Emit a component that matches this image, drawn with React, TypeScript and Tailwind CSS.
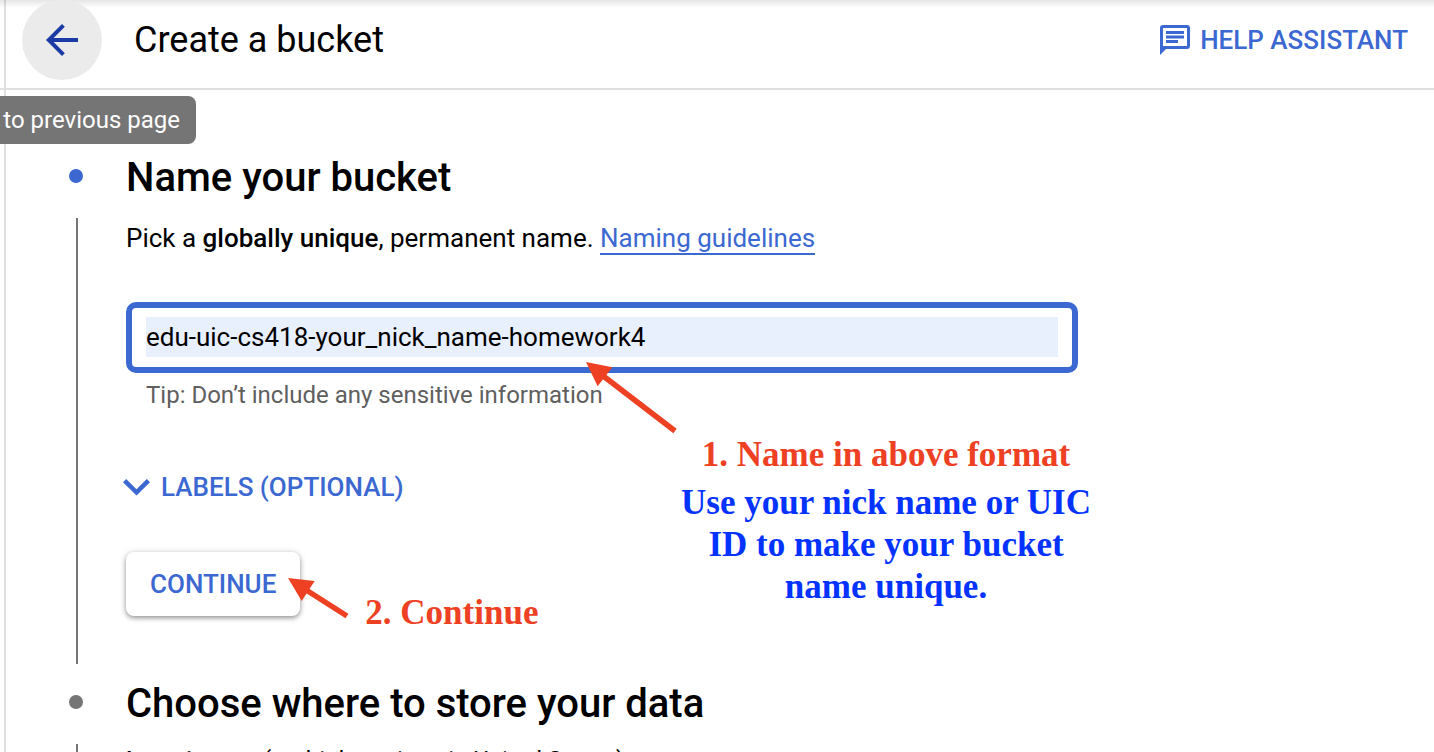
import { MdArrowBack } from "react-icons/md";

function Arrow({ className, width, height }: { className: string; width: number; height: number }) {
  const length = Math.hypot(width, height);
  const ux = width / length;
  const uy = height / length;
  const head = 24;
  const spread = 12;
  const bx = ux * head;
  const by = uy * head;
  const points = `0,0 ${bx + uy * spread},${by - ux * spread} ${bx - uy * spread},${by + ux * spread}`;
  return (
    <svg aria-hidden="true" className={className} width={width} height={height} overflow="visible">
      <line x1={bx - 2} y1={by - 1} x2={width} y2={height} stroke="#ee4023" strokeWidth="5.5" />
      <polygon points={points} fill="#ee4023" />
    </svg>
  );
}

export default function App() {
  return (
    <div className="h-screen overflow-hidden bg-white font-['Roboto',sans-serif] text-black">
      <div className="relative ml-1 min-h-full border-l-2 border-[#e0e0e0]">
        <div className="pointer-events-none absolute top-0 right-0 -left-1.5 h-2 bg-linear-to-b from-black/10 to-transparent" />
        <header className="relative -ml-1.5 flex h-[90px] items-start justify-between border-b-2 border-[#e0e0e0] pr-[26px] pl-[22px]">
          <div className="flex items-center gap-8">
            <button
              type="button"
              aria-label="Back to previous page"
              className="flex size-20 items-center justify-center rounded-full bg-[#ebebeb] text-[#1a3aa6]"
            >
              <MdArrowBack aria-hidden="true" className="size-12" />
            </button>
            <h1 className="text-[36px] leading-10">Create a bucket</h1>
          </div>
          <button type="button" className="flex h-20 items-center gap-2.5 text-[26px] font-medium text-[#3b68d1]">
            <svg aria-hidden="true" viewBox="0 0 30 30" className="size-[30px]" fill="none">
              <path
                d="M0 30V3a3 3 0 0 1 3-3h24a3 3 0 0 1 3 3v18a3 3 0 0 1-3 3H6zM3 3v18h24V3zM6 6h18v3H6zM6 10.500h18v3H6zM6 15h12v3H6z"
                fill="currentColor"
                fillRule="evenodd"
              />
            </svg>
            HELP ASSISTANT
          </button>
        </header>

        <div
          role="tooltip"
          className="absolute top-24 right-full -mr-[190px] flex h-12 items-center rounded-r-lg bg-[#757575] px-4 text-2xl whitespace-nowrap text-white"
        >
          Back to previous page
        </div>

        <main className="pt-[62px] pl-[62px]">
          <section className="grid grid-cols-[16px_1fr] gap-x-[42px]">
            <div className="flex flex-col items-center gap-[35px] pt-[17px] pb-3.5">
              <span className="size-3.5 shrink-0 rounded-full bg-[#3b68d1]" />
              <span className="ml-0.5 w-0.5 grow bg-[#757575]" />
            </div>
            <div className="pb-11">
              <h2 className="text-[40px] leading-[52px] font-medium">Name your bucket</h2>
              <p className="mt-4 text-[26px] leading-9">
                Pick a <strong className="font-medium">globally unique</strong>, permanent name.{" "}
                <a href="#naming-guidelines" className="inline-block border-b-2 border-[#3b68d1] leading-[30px] text-[#3b68d1]">
                  Naming guidelines
                </a>
              </p>
              <div className="relative mt-[46px] w-[952px] max-w-full">
                <div className="rounded-[10px] border-6 border-[#3b68d1] px-3.5 pt-[9px] pb-2.5">
                  <input
                    aria-label="Bucket name"
                    aria-describedby="name-tip"
                    defaultValue="edu-uic-cs418-your_nick_name-homework4"
                    className="block h-10 w-full bg-[#e8effd] text-[26px] outline-none"
                  />
                </div>
                <p id="name-tip" className="mt-1 pl-5 text-2xl leading-9 text-[#5f5f5f]">
                  Tip: Don’t include any sensitive information
                </p>
                <Arrow className="absolute top-[60px] left-[460px]" width={89} height={69} />
                <div className="absolute top-[132px] left-[545px] w-[430px] text-center font-['Liberation_Serif',serif] text-[35px] leading-[42px] font-bold">
                  <p className="text-[#ee4023]">1. Name in above format</p>
                  <p className="mt-1.5 text-[#0433ff]">Use your nick name or UIC ID to make your bucket name unique.</p>
                </div>
              </div>
              <button type="button" className="mt-[54px] -ml-[3px] flex items-center gap-[11px] text-[26px] leading-10 font-medium text-[#3b68d1]">
                <svg aria-hidden="true" viewBox="0 0 27 17" className="h-[17px] w-[27px]" fill="none">
                  <path d="M3.200 0 13.500 10.300 23.800 0 27 3.200 13.500 16.500 0 3.200z" fill="currentColor" />
                </svg>
                LABELS (OPTIONAL)
              </button>
              <div className="relative mt-[45px] flex items-start">
                <button
                  type="button"
                  className="h-16 rounded-lg bg-white px-6 text-[26px] font-medium text-[#3b68d1] shadow-[0_2px_5px_rgba(0,0,0,0.4),0_0_8px_rgba(0,0,0,0.08)]"
                >
                  CONTINUE
                </button>
                <Arrow className="absolute top-[26px] left-[162px]" width={59} height={38} />
                <p className="mt-10 ml-[65px] font-['Liberation_Serif',serif] text-[35px] leading-[42px] font-bold text-[#ee4023]">
                  2. Continue
                </p>
              </div>
            </div>
          </section>
          <section className="grid grid-cols-[16px_1fr] gap-x-[42px]">
            <div className="flex flex-col items-center gap-[35px] pt-[17px]">
              <span className="size-3.5 shrink-0 rounded-full bg-[#757575]" />
              <span className="ml-0.5 w-0.5 grow bg-[#757575]" />
            </div>
            <div>
              <h2 className="text-[40px] leading-[52px] font-medium">Choose where to store your data</h2>
              <p className="mt-3 text-2xl leading-9">
                <strong className="font-medium">Location:</strong> us (multiple regions in United States)
              </p>
            </div>
          </section>
        </main>
      </div>
    </div>
  );
}
